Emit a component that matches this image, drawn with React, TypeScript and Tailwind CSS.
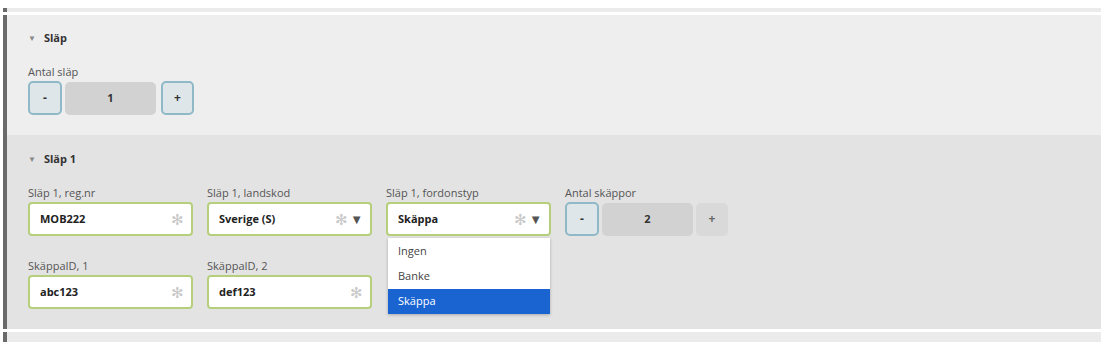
import React from "react";

const font = { fontFamily: '"Open Sans", "Noto Sans", Arial, sans-serif' };

function Asterisk() {
  return <span className="text-[15px] leading-none text-[#c8c8c8]">✻</span>;
}

function Field({ label, value, select, children }: { label: string; value: string; select?: boolean; children?: React.ReactNode }) {
  return (
    <div className="relative flex w-[165px] flex-col">
      <div className="mb-[3px] h-[13px] text-[11px] leading-[13px] text-[#555]">{label}</div>
      <div className="flex h-[34px] items-center rounded-[4px] border-2 border-[#b5cf7c] bg-white pl-[10px] pr-[7px]">
        <span className="flex-1 text-[11px] font-bold text-[#222]">{value}</span>
        <Asterisk />
        {select && <span className="ml-[2px] text-[13px] leading-none text-[#555]">▼</span>}
      </div>
      {children}
    </div>
  );
}

function Counter({ label, value, plusDisabled }: { label: string; value: string; plusDisabled?: boolean }) {
  return (
    <div className="flex flex-col">
      <div className="mb-[3px] h-[13px] text-[11px] leading-[13px] text-[#555]">{label}</div>
      <div className="flex items-center gap-[3px]">
        <div className="flex h-[34px] w-[34px] items-center justify-center rounded-[5px] border-2 border-[#8fb9c6] bg-[#dfe6e9] text-[12px] font-bold text-[#333]">-</div>
        <div className="flex h-[33px] w-[91px] items-center justify-center rounded-[5px] bg-[#d2d2d2] text-[11px] font-bold text-[#333]">{value}</div>
        {plusDisabled ? (
          <div className="flex h-[33px] w-[32px] items-center justify-center rounded-[5px] bg-[#d9d9d9] text-[12px] font-bold text-[#666]">+</div>
        ) : (
          <div className="ml-[2px] flex h-[34px] w-[33px] items-center justify-center rounded-[5px] border-2 border-[#8fb9c6] bg-[#dfe6e9] text-[12px] font-bold text-[#333]">+</div>
        )}
      </div>
    </div>
  );
}

function Heading({ title }: { title: string }) {
  return (
    <div className="flex h-[14px] items-center gap-[8px]">
      <span className="text-[8px] leading-none text-[#888]">▼</span>
      <span className="text-[11px] font-bold text-[#333]">{title}</span>
    </div>
  );
}

export default function App() {
  return (
    <div className="h-[347px] w-[1106px] overflow-hidden bg-white pt-[8px] pl-[3px]" style={font}>
      <div className="w-[1098px]">
        <div className="h-[4px] border-l-4 border-[#6a6a6a] bg-[#ebebeb]" />
        <div className="mt-[3px] h-[120px] border-l-4 border-[#6a6a6a] bg-[#eeeeee] pl-[21px] pt-[16px]">
          <Heading title="Släp" />
          <div className="mt-[20px]">
            <Counter label="Antal släp" value="1" />
          </div>
        </div>
        <div className="h-[194px] border-l-4 border-[#6a6a6a] bg-[#e3e3e3] pl-[21px] pt-[17px]">
          <Heading title="Släp 1" />
          <div className="mt-[20px] flex gap-[14px]">
            <Field label="Släp 1, reg.nr" value="MOB222" />
            <Field label="Släp 1, landskod" value="Sverige (S)" select />
            <Field label="Släp 1, fordonstyp" value="Skäppa" select>
              <div className="absolute left-[2px] top-[52px] z-10 w-[162px] bg-white text-[11px] text-[#444] shadow-[0_1px_3px_rgba(0,0,0,0.25)]">
                <div className="flex h-[26px] items-center pl-[10px]">Ingen</div>
                <div className="flex h-[25px] items-center pl-[10px]">Banke</div>
                <div className="flex h-[25px] items-center bg-[#1a64d2] pl-[10px] text-white">Skäppa</div>
              </div>
            </Field>
            <Counter label="Antal skäppor" value="2" plusDisabled />
          </div>
          <div className="mt-[23px] flex gap-[14px]">
            <Field label="SkäppaID, 1" value="abc123" />
            <Field label="SkäppaID, 2" value="def123" />
          </div>
        </div>
        <div className="mt-[3px] h-[10px] border-l-4 border-[#6a6a6a] bg-[#ebebeb]" />
      </div>
    </div>
  );
}
